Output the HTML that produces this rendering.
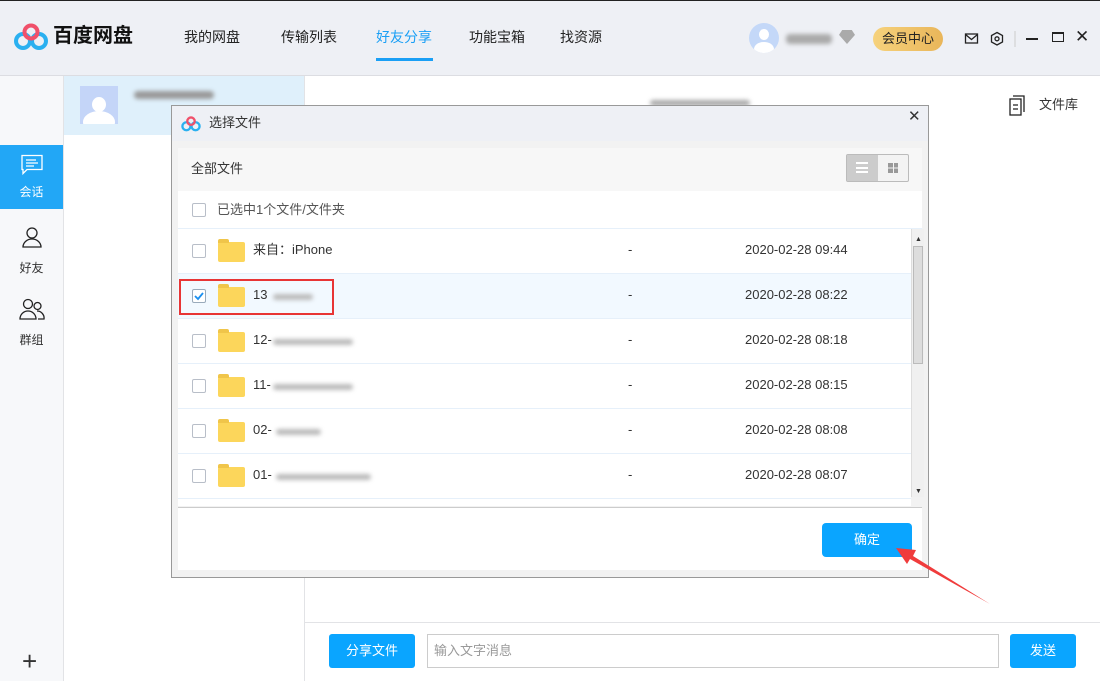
<!DOCTYPE html>
<html><head><meta charset="utf-8"><style>
*{margin:0;padding:0;box-sizing:border-box}
body{width:1100px;height:681px;overflow:hidden;position:relative;font-family:"Liberation Sans","Noto Sans CJK SC",sans-serif;font-size:13px;color:#333;background:#fff;line-height:18px}
.a{position:absolute}
.hdr{left:0;top:0;width:1100px;height:76px;background:#eef0f5;border-top:1px solid #222;border-bottom:1px solid #dcdde2}
.nav{top:27px;font-size:14px;color:#222}
.side{left:0;top:76px;width:64px;height:605px;background:#f7f8fa;border-right:1px solid #e2e3e6}
.si{left:0;width:63px;text-align:center;font-size:12px}
.list{left:64px;top:76px;width:241px;height:605px;background:#fff;border-right:1px solid #e2e3e6}
.blur{background:#bbb;filter:blur(2px);border-radius:4px;height:6px}
.dlg{left:171px;top:105px;width:758px;height:473px;background:#f2f2f2;border:1px solid #999}
.row{left:6px;width:733px;height:45px;border-bottom:1px solid #e6f0fa;background:#fff}
.cb{position:absolute;left:14px;top:15px;width:14px;height:14px;border:1px solid #b8bec8;border-radius:2px;background:#fff}
.fold{position:absolute;left:40px;top:13px;width:27px;height:20px;background:#fcd65b;border-radius:2px}
.fold:before{content:"";position:absolute;left:0;top:-3px;width:11px;height:4px;background:#f0c54a;border-radius:2px 2px 0 0}
.nm{position:absolute;left:75px;top:12px;font-size:13px}
.dash{position:absolute;left:450px;top:12px}
.dt{position:absolute;left:567px;top:12px}
.btn{background:#0aa5ff;color:#fff;text-align:center;border-radius:3px;font-size:13px}
</style></head><body>
<div class="a hdr">
 <svg class="a" style="left:14px;top:22px" width="34" height="28" viewBox="0 0 34 28"><circle cx="9" cy="18" r="7" fill="none" stroke="#2ab0f0" stroke-width="4"/><circle cx="25" cy="18" r="7" fill="none" stroke="#2ab0f0" stroke-width="4"/><circle cx="17" cy="9" r="6.5" fill="none" stroke="#f0506a" stroke-width="4"/></svg>
 <div class="a" style="left:53px;top:22px;font-size:20px;font-weight:bold;color:#111;line-height:26px">百度网盘</div>
 <div class="a nav" style="left:184px">我的网盘</div>
 <div class="a nav" style="left:281px">传输列表</div>
 <div class="a nav" style="left:376px;color:#1a9ff5">好友分享</div>
 <div class="a" style="left:376px;top:57px;width:57px;height:3px;background:#1a9ff5"></div>
 <div class="a nav" style="left:469px">功能宝箱</div>
 <div class="a nav" style="left:560px">找资源</div>
 <div class="a" style="left:749px;top:22px;width:30px;height:30px;border-radius:50%;background:#c4d8f8;overflow:hidden"><div class="a" style="left:10px;top:6px;width:10px;height:11px;border-radius:50%;background:#fff"></div><div class="a" style="left:5px;top:19px;width:20px;height:14px;border-radius:50%;background:#fff"></div></div>
 <div class="a blur" style="left:786px;top:33px;width:46px;height:10px;background:#aaa"></div>
 <div class="a" style="left:839px;top:29px;width:16px;height:14px;background:#aaa;clip-path:polygon(20% 0,80% 0,100% 35%,50% 100%,0 35%)"></div>
 <div class="a" style="left:873px;top:26px;width:70px;height:24px;border-radius:12px;background:linear-gradient(90deg,#f6d27c,#e9b65a);font-size:13px;text-align:center;line-height:24px;color:#222">会员中心</div>
 <svg class="a" style="left:964px;top:30px" width="72" height="16" viewBox="0 0 72 16"><rect x="1.5" y="3" width="12" height="9" fill="none" stroke="#222" stroke-width="1.3"/><path d="M1.5 3.5l6 5 6-5" fill="none" stroke="#222" stroke-width="1.3"/><path d="M33 1.5l5.5 3v6.5l-5.5 3-5.5-3V4.5z" fill="none" stroke="#222" stroke-width="1.3"/><circle cx="33" cy="7.8" r="2" fill="none" stroke="#222" stroke-width="1.3"/><line x1="51" y1="0" x2="51" y2="16" stroke="#ccc"/></svg>
 <div class="a" style="left:1026px;top:37px;width:12px;height:1.5px;background:#222"></div>
 <div class="a" style="left:1052px;top:31px;width:12px;height:10px;border:1.3px solid #222;border-top-width:2.5px"></div>
 <div class="a" style="left:1075px;top:27px;font-size:17px;color:#222">✕</div>
</div>
<div class="a side">
 <div class="a si" style="top:69px;height:64px;background:#22a7f6;color:#fff"><svg style="margin-top:9px" width="24" height="22" viewBox="0 0 24 22"><path d="M2 1.5h20v14H7l-4 4v-4H2z" fill="none" stroke="#fff" stroke-width="1.3"/><path d="M6 6h10M6 9h12M6 12h8" stroke="#fff" stroke-width="1.2"/></svg><div style="margin-top:2px">会话</div></div>
 <div class="a si" style="top:150px"><svg width="24" height="22" viewBox="0 0 24 22"><circle cx="12" cy="7" r="5" fill="none" stroke="#222" stroke-width="1.3"/><path d="M3 21a9 8 0 0118 0z" fill="none" stroke="#222" stroke-width="1.3"/></svg><div style="margin-top:6px">好友</div></div>
 <div class="a si" style="top:222px"><svg width="26" height="22" viewBox="0 0 26 22"><circle cx="9" cy="6" r="4.5" fill="none" stroke="#222" stroke-width="1.3"/><path d="M1 21a8 8 0 0116 0z" fill="none" stroke="#222" stroke-width="1.3"/><circle cx="18.5" cy="8" r="3.5" fill="none" stroke="#222" stroke-width="1.3"/><path d="M18 13a7 7 0 017 8h-6" fill="none" stroke="#222" stroke-width="1.3"/></svg><div style="margin-top:6px">群组</div></div>
 <div class="a" style="left:22px;top:572px;font-size:26px;font-weight:200;color:#333;line-height:1">+</div>
</div>
<div class="a list">
 <div class="a" style="left:0;top:0;width:240px;height:59px;background:#dff0fb"></div>
 <div class="a" style="left:16px;top:10px;width:38px;height:38px;background:#c4d5f8;overflow:hidden"><div class="a" style="left:12px;top:11px;width:14px;height:15px;border-radius:50%;background:#fff"></div><div class="a" style="left:3px;top:25px;width:32px;height:22px;border-radius:50%;background:#fff"></div></div>
 <div class="a blur" style="left:70px;top:15px;width:80px;height:8px;background:#999"></div>
</div>
<div class="a blur" style="left:650px;top:100px;width:100px;height:6px;background:#aaa"></div>
<svg class="a" style="left:1008px;top:95px" width="20" height="22" viewBox="0 0 20 22"><rect x="2" y="4" width="11" height="16" fill="none" stroke="#222" stroke-width="1.3"/><path d="M5 1h11v16" fill="none" stroke="#222" stroke-width="1.3"/><path d="M5 10h5M5 14h5" stroke="#222" stroke-width="1.2"/></svg>
<div class="a" style="left:1039px;top:96px;font-size:13px">文件库</div>
<div class="a" style="left:305px;top:622px;width:795px;height:1px;background:#e2e3e6"></div>
<div class="a btn" style="left:329px;top:634px;width:86px;height:34px;line-height:34px">分享文件</div>
<div class="a" style="left:427px;top:634px;width:572px;height:34px;border:1px solid #ccc;color:#999;padding:7px 6px;font-size:13px">输入文字消息</div>
<div class="a btn" style="left:1010px;top:634px;width:66px;height:34px;line-height:34px">发送</div>
<div class="a dlg">
 <div class="a" style="left:0;top:0;width:756px;height:35px;background:#eef0f5"></div>
 <svg class="a" style="left:8px;top:10px" width="22" height="16" viewBox="0 0 34 28"><circle cx="9" cy="18" r="7" fill="none" stroke="#2ab0f0" stroke-width="4"/><circle cx="25" cy="18" r="7" fill="none" stroke="#2ab0f0" stroke-width="4"/><circle cx="17" cy="9" r="6.5" fill="none" stroke="#f0506a" stroke-width="4"/></svg>
 <div class="a" style="left:37px;top:8px">选择文件</div>
 <div class="a" style="left:736px;top:2px;font-size:15px">✕</div>
 <div class="a" style="left:6px;top:42px;width:744px;height:43px;background:#f7f7f7"></div>
 <div class="a" style="left:19px;top:54px">全部文件</div>
 <div class="a" style="left:674px;top:48px;width:63px;height:28px;border:1px solid #bbb;border-radius:2px;background:#f3f3f3"><div class="a" style="left:0;top:0;width:31px;height:26px;background:#ccc"></div><div class="a" style="left:9px;top:7px;width:12px;height:11px;border-top:2px solid #fff;border-bottom:2px solid #fff"><div style="margin-top:2.5px;height:2px;background:#fff"></div></div><div class="a" style="left:41px;top:8px;width:10px;height:10px;background:linear-gradient(#999 0 45%,transparent 45% 55%,#999 55%)"></div><div class="a" style="left:45.5px;top:8px;width:1px;height:10px;background:#f3f3f3"></div></div>
 <div class="a" style="left:6px;top:85px;width:744px;height:38px;background:#fff;border-bottom:1px solid #e6f0fa"><div class="cb" style="top:12px"></div><div class="a" style="left:39px;top:10px;color:#555">已选中1个文件/文件夹</div></div>
 <div class="a row" style="top:123px"><div class="cb"></div><div class="fold"></div><div class="nm">来自：iPhone</div><div class="dash">-</div><div class="dt">2020-02-28 09:44</div></div>
 <div class="a row" style="top:168px;background:#f2f9ff"><div class="cb" style="border-color:#9ab"><svg width="12" height="12" viewBox="0 0 12 12" style="position:absolute;left:0;top:0"><path d="M2 6l3 3 5-6" fill="none" stroke="#1a8ff0" stroke-width="1.8"/></svg></div><div class="fold"></div><div class="nm">13</div><div class="a blur" style="left:95px;top:20px;width:40px"></div><div class="dash">-</div><div class="dt">2020-02-28 08:22</div></div>
 <div class="a row" style="top:213px"><div class="cb"></div><div class="fold"></div><div class="nm">12-</div><div class="a blur" style="left:95px;top:20px;width:80px"></div><div class="dash">-</div><div class="dt">2020-02-28 08:18</div></div>
 <div class="a row" style="top:258px"><div class="cb"></div><div class="fold"></div><div class="nm">11-</div><div class="a blur" style="left:95px;top:20px;width:80px"></div><div class="dash">-</div><div class="dt">2020-02-28 08:15</div></div>
 <div class="a row" style="top:303px"><div class="cb"></div><div class="fold"></div><div class="nm">02-</div><div class="a blur" style="left:98px;top:20px;width:45px"></div><div class="dash">-</div><div class="dt">2020-02-28 08:08</div></div>
 <div class="a row" style="top:348px"><div class="cb"></div><div class="fold"></div><div class="nm">01-</div><div class="a blur" style="left:98px;top:20px;width:95px"></div><div class="dash">-</div><div class="dt">2020-02-28 08:07</div></div>
 <div class="a" style="left:6px;top:393px;width:733px;height:7px;background:#fff"></div>
 <div class="a" style="left:739px;top:123px;width:13px;height:268px;background:#f0f0f0;border-left:1px solid #ddd"><div class="a" style="left:1px;top:17px;width:10px;height:118px;background:#ddd;border:1px solid #bbb"></div><div class="a" style="left:3px;top:2px;font-size:7px">▲</div><div class="a" style="left:3px;top:254px;font-size:7px">▼</div></div>
 <div class="a" style="left:6px;top:401px;width:744px;height:63px;background:#fff;border-top:1px solid #ccc"></div>
 <div class="a btn" style="left:650px;top:417px;width:90px;height:34px;line-height:34px;border-radius:4px">确定</div>
 <div class="a" style="left:7px;top:173px;width:155px;height:36px;border:2px solid #e83535"></div>
</div>
<svg class="a" style="left:890px;top:540px" width="110" height="70" viewBox="0 0 110 70"><path d="M100 64L23 16l3-6-20-2 11 16 3-5z" fill="#f03c3c"/></svg>
</body></html>
